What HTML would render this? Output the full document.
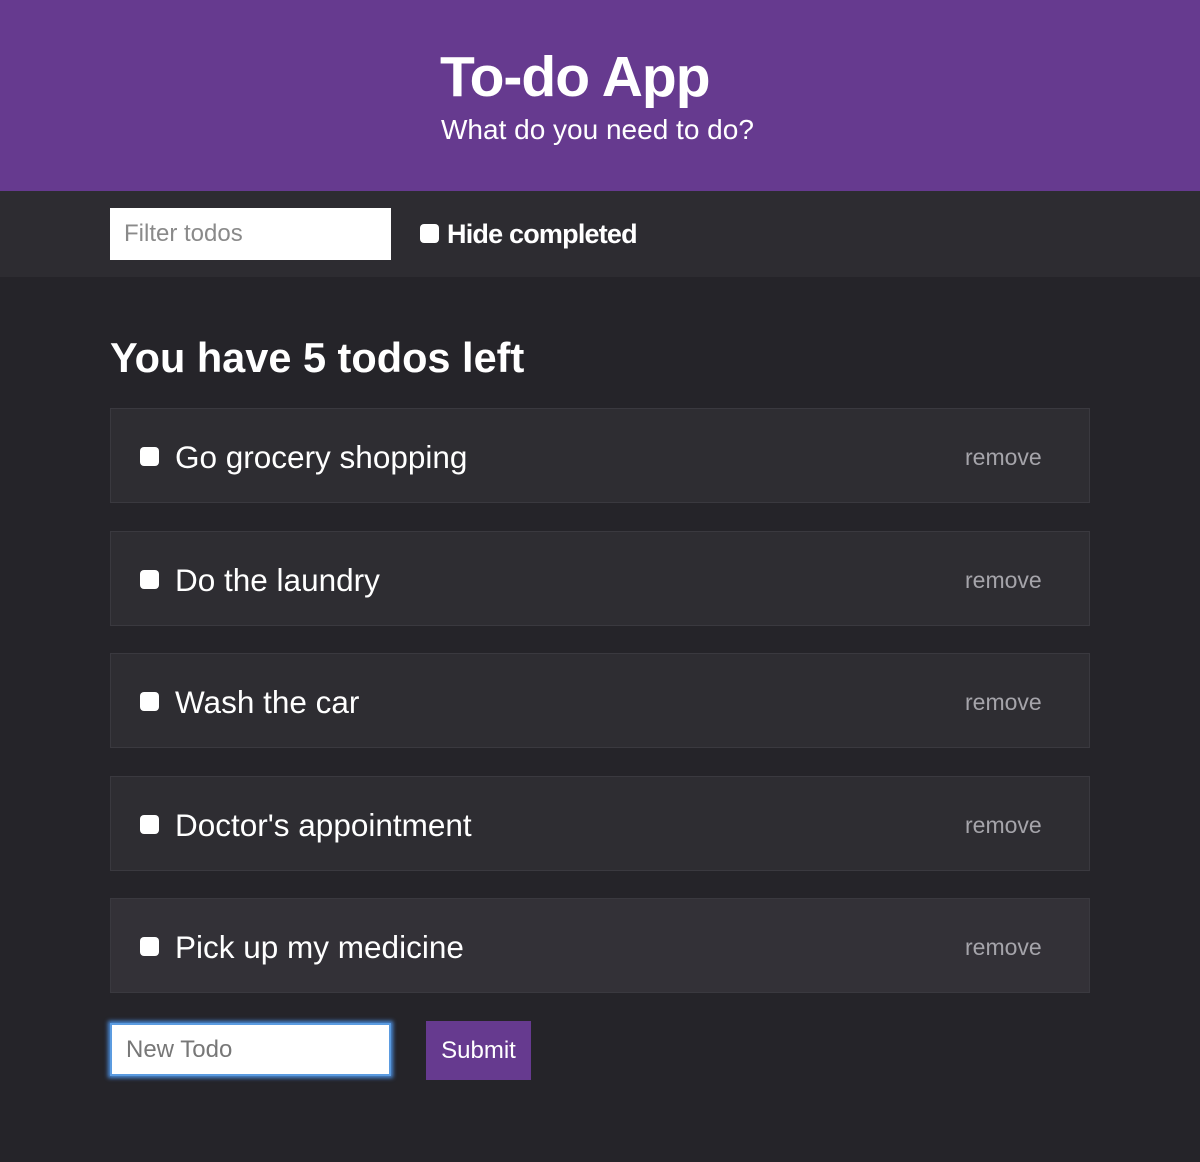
<!DOCTYPE html>
<html><head><meta charset="utf-8"><style>
*{margin:0;padding:0;box-sizing:border-box}
body{width:1200px;height:1162px;background:#252429;font-family:"Liberation Sans",Arial,sans-serif;position:relative;overflow:hidden;color:#fff}
.abs{position:absolute}
#hdr{left:0;top:0;width:1200px;height:191px;background:#663a8f}
#tb{left:0;top:191px;width:1200px;height:86px;background:#2d2c31}
.inp{background:#fff;color:#8a8a8a;font-size:24px;padding-left:14px;display:flex;align-items:center}
.cb{width:19px;height:19px;background:#fff;border-radius:4px}
.item{left:110px;width:980px;height:95px;background:#2e2d32;border:1px solid #3a393f}
.item .cb{position:absolute;left:29px;top:38px}
.item .t{position:absolute;left:64px;top:30px;font-size:31.5px;line-height:36px;color:#fff}
.item .r{position:absolute;left:854px;top:35px;font-size:23px;color:#a5a4aa}
</style></head><body>
<div id="hdr" class="abs"></div>
<div class="abs" style="left:440px;top:44px;font-size:57px;font-weight:bold;line-height:66px;letter-spacing:-1px">To-do App</div>
<div class="abs" style="left:441px;top:113px;font-size:28px;line-height:34px">What do you need to do?</div>
<div id="tb" class="abs"></div>
<div class="abs inp" style="left:110px;top:208px;width:281px;height:52px">Filter todos</div>
<div class="abs cb" style="left:420px;top:224px"></div>
<div class="abs" style="left:447px;top:218px;font-size:27px;font-weight:bold;line-height:32px;letter-spacing:-0.8px">Hide completed</div>
<div class="abs" style="left:110px;top:333px;font-size:41.5px;font-weight:bold;line-height:50px">You have 5 todos left</div>
<div class="abs item" style="top:408px"><div class="cb"></div><div class="t">Go grocery shopping</div><div class="r">remove</div></div>
<div class="abs item" style="top:531px"><div class="cb"></div><div class="t">Do the laundry</div><div class="r">remove</div></div>
<div class="abs item" style="top:653px"><div class="cb"></div><div class="t">Wash the car</div><div class="r">remove</div></div>
<div class="abs item" style="top:776px"><div class="cb"></div><div class="t">Doctor's appointment</div><div class="r">remove</div></div>
<div class="abs item" style="top:898px;background:#333137"><div class="cb"></div><div class="t">Pick up my medicine</div><div class="r">remove</div></div>
<div class="abs inp" style="left:110px;top:1023px;width:281px;height:53px;border:2px solid #5b9be0;box-shadow:0 0 4px 2px #4a8ad8;color:#777">New Todo</div>
<div class="abs" style="left:426px;top:1021px;width:105px;height:59px;background:#663a8f;font-size:24px;display:flex;align-items:center;justify-content:center">Submit</div>
</body></html>
